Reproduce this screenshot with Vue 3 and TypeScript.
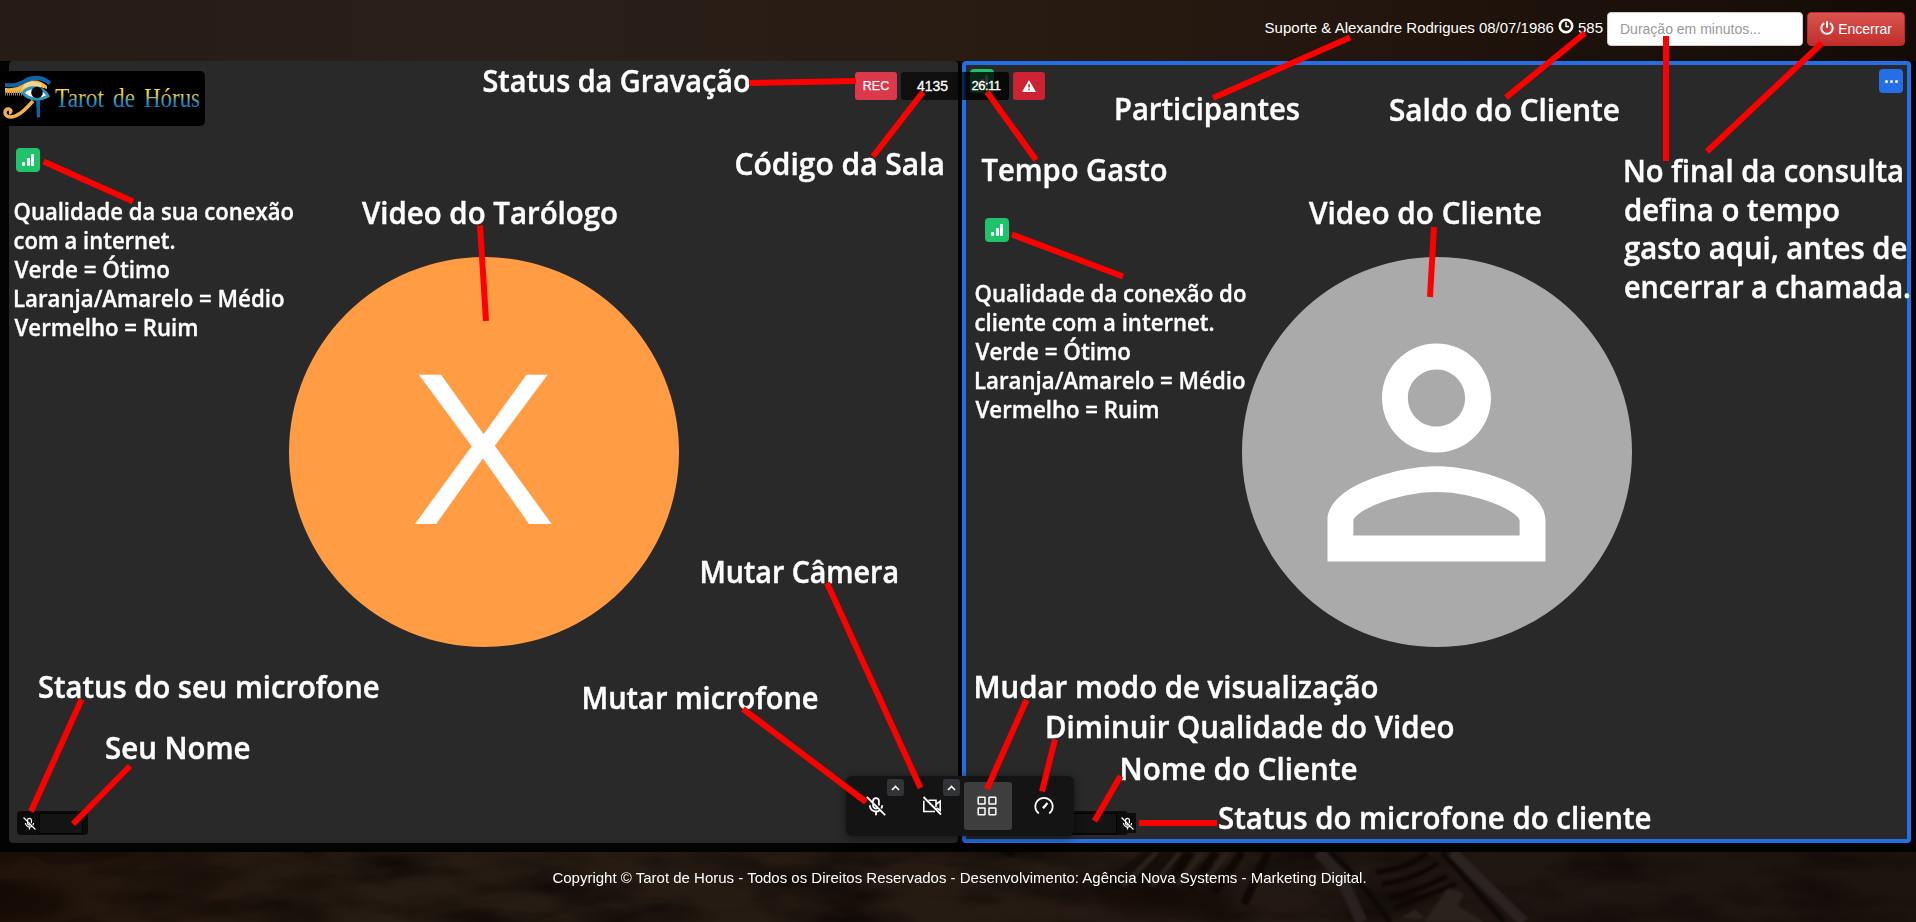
<script setup lang="ts">
interface Note { text: string; x: number; end: number; y: number; small?: boolean }

const notes: Note[] = [
  { text: 'Status da Gravação', x: 482.5, end: 750.5, y: 91.5 },
  { text: 'Código da Sala', x: 734.5, end: 945, y: 174.7 },
  { text: 'Video do Tarólogo', x: 362, end: 618, y: 223.5 },
  { text: 'Participantes', x: 1114, end: 1300, y: 119.7 },
  { text: 'Tempo Gasto', x: 981.5, end: 1167.5, y: 180.7 },
  { text: 'Video do Cliente', x: 1309, end: 1542, y: 223.5 },
  { text: 'Saldo do Cliente', x: 1389, end: 1620, y: 120.5 },
  { text: 'No final da consulta', x: 1623, end: 1904, y: 181.5 },
  { text: 'defina o tempo', x: 1624, end: 1840, y: 220.5 },
  { text: 'gasto aqui, antes de', x: 1624, end: 1907.5, y: 259 },
  { text: 'encerrar a chamada.', x: 1624, end: 1911, y: 297.5 },
  { text: 'Mudar modo de visualização', x: 973.5, end: 1378.5, y: 697.5 },
  { text: 'Diminuir Qualidade do Video', x: 1045, end: 1454.5, y: 738 },
  { text: 'Nome do Cliente', x: 1119.5, end: 1357.5, y: 780.3 },
  { text: 'Status do microfone do cliente', x: 1218, end: 1651.5, y: 829.3 },
  { text: 'Status do seu microfone', x: 38, end: 379.5, y: 697.5 },
  { text: 'Seu Nome', x: 105, end: 250.5, y: 758.5 },
  { text: 'Mutar Câmera', x: 699.5, end: 899, y: 582.5 },
  { text: 'Mutar microfone', x: 581.5, end: 818.5, y: 708.5 },
  { text: 'Qualidade da sua conexão', x: 13.5, end: 294, y: 219.5, small: true },
  { text: 'com a internet.', x: 13.5, end: 175.5, y: 248.5, small: true },
  { text: 'Verde = Ótimo', x: 14.5, end: 170, y: 277.5, small: true },
  { text: 'Laranja/Amarelo = Médio', x: 13, end: 284.5, y: 306.5, small: true },
  { text: 'Vermelho = Ruim', x: 14.5, end: 198.5, y: 335.5, small: true },
  { text: 'Qualidade da conexão do', x: 974.5, end: 1246.5, y: 301.5, small: true },
  { text: 'cliente com a internet.', x: 974.5, end: 1214.5, y: 330.5, small: true },
  { text: 'Verde = Ótimo', x: 975.5, end: 1131, y: 359.5, small: true },
  { text: 'Laranja/Amarelo = Médio', x: 974, end: 1245.5, y: 388.5, small: true },
  { text: 'Vermelho = Ruim', x: 975.5, end: 1159.5, y: 417.5, small: true },
]

const pointers: number[][] = [
  [749, 83, 856, 81], [923, 92, 873, 156.5], [987, 92, 1036, 160],
  [1350, 37.5, 1213, 98], [1585, 33, 1506, 97.5], [1666, 36, 1666, 161],
  [1822, 43, 1707, 151.5], [43.5, 161.5, 133, 201.5], [1012, 234.5, 1123, 276.5],
  [480, 225.5, 486, 321], [1434, 227, 1430, 297], [827, 583, 920.5, 788],
  [743, 709, 866, 802], [1026.5, 700, 987, 789], [1055, 739.5, 1042, 791.5],
  [1120.5, 776, 1094.5, 821], [1139, 823, 1217, 823], [81.5, 699.5, 31, 811.5],
  [130, 766, 73, 824],
]
</script>

<template>
  <div class="page">
    <svg class="backdrop" width="1916" height="922">
      <defs>
        <linearGradient id="wood" x1="0" x2="1" y1="0" y2="0">
          <stop offset="0" stop-color="#261b15" /><stop offset=".25" stop-color="#2a1f1a" />
          <stop offset=".5" stop-color="#281c13" /><stop offset=".7" stop-color="#22160e" />
          <stop offset="1" stop-color="#150b06" />
        </linearGradient>
        <linearGradient id="sand" x1="0" x2="1" y1="0" y2="0">
          <stop offset="0" stop-color="#22140b" /><stop offset=".2" stop-color="#261c13" />
          <stop offset=".5" stop-color="#261b13" /><stop offset=".75" stop-color="#211712" />
          <stop offset="1" stop-color="#1e140f" />
        </linearGradient>
        <filter id="grain" x="0" y="0" width="100%" height="100%" color-interpolation-filters="sRGB">
          <feTurbulence type="fractalNoise" baseFrequency=".009 .03" numOctaves="4" seed="8" />
          <feColorMatrix values="0 0 0 0 .06  0 0 0 0 .035  0 0 0 0 .02  2 0 0 0 -.75" />
        </filter>
        <filter id="soft" color-interpolation-filters="sRGB"><feGaussianBlur stdDeviation="1.3" /></filter>
        <filter id="haze" color-interpolation-filters="sRGB"><feGaussianBlur stdDeviation="7" /></filter>
      </defs>
      <rect width="1916" height="922" fill="url(#wood)" />
      <rect y="852" width="1916" height="70" fill="url(#sand)" />
      <rect y="852" width="1916" height="70" filter="url(#grain)" />
      <g filter="url(#haze)" fill="#120904" opacity=".7">
        <ellipse cx="5" cy="902" rx="65" ry="20" />
        <ellipse cx="1165" cy="900" rx="70" ry="14" />
      </g>
      <g filter="url(#soft)">
        <path d="M20 852H130Q100 866 50 864Z" fill="#120a05" opacity=".5" />
        <path d="M1000 852H1018L1011 857Z" fill="#0c0603" />
        <path d="M1142 852L1096 890H1140L1160 880 1190 852Z" fill="#120b07" opacity=".8" />
        <path d="M1157 852L1123 886M1180 852L1152 886M1203 852L1178 884M1228 852L1203 884" stroke="#2b211b" stroke-width="5" />
        <path d="M1191 852L1166 886M1216 852L1190 888M1242 852L1214 892M1268 852L1244 904" stroke="#0f0805" stroke-width="8" />
        <path d="M1318 852C1345 875 1350 900 1362 922" fill="none" stroke="#282120" stroke-width="12" />
        <path d="M1330 852C1357 875 1370 895 1390 922M1442 852L1504 922" fill="none" stroke="#0e0907" stroke-width="5" />
        <path d="M1452 852L1524 922" stroke="#2a2321" stroke-width="11" />
        <path d="M1376 872Q1405 870 1427 853M1382 884Q1414 880 1438 863M1390 898Q1423 889 1447 876M1394 908L1456 884" fill="none" stroke="#0e0805" stroke-width="5" />
        <path d="M1424 922L1448 888 1464 893 1458 906 1484 922Z" fill="#2b221c" />
        <path d="M1402 918L1415 909 1425 919" fill="#2b221c" />
      </g>
    </svg>

    <header class="topbar">
      <div class="people">
        <span>Suporte &amp; Alexandre Rodrigues 08/07/1986</span>
        <svg class="clock" viewBox="0 0 16 16"><circle cx="8" cy="8" r="6.2" fill="none" stroke="#fff" stroke-width="2.6" /><path d="M8 4v4.6h3" fill="none" stroke="#fff" stroke-width="1.5" /></svg>
        <span>585</span>
      </div>
      <input class="duration" type="text" placeholder="Duração em minutos..." />
      <button class="finish">
        <svg width="14" height="14" viewBox="0 0 14 14"><path d="M4.2 2.2A5.7 5.7 0 1 0 9.8 2.2M7 .2v6.6" fill="none" stroke="#fff" stroke-width="2" /></svg>
        <span>Encerrar</span>
      </button>
    </header>

    <main class="stage">
      <section class="tile">
        <div class="avatar orange"><span class="initial">X</span></div>
        <div class="name-tag mine">
          <svg class="mini-mic" viewBox="0 0 24 24"><use href="#mic-off" /></svg>
          <i class="redacted"></i>
        </div>
      </section>
      <section class="tile client">
        <div class="avatar gray">
          <svg width="327" height="327" viewBox="0 0 24 24" fill="#fff"><path d="M12 5.9c1.16 0 2.1.94 2.1 2.1s-.94 2.1-2.1 2.1S9.9 9.16 9.9 8s.94-2.1 2.1-2.1m0 9c2.97 0 6.1 1.46 6.1 2.1v1.1H5.9V17c0-.64 3.13-2.1 6.1-2.1M12 4C9.79 4 8 5.79 8 8s1.79 4 4 4 4-1.79 4-4-1.79-4-4-4m0 9c-2.67 0-8 1.34-8 4v3h16v-3c0-2.66-5.33-4-8-4" /></svg>
        </div>
        <button class="more"><i></i><i></i><i></i></button>
        <div class="name-tag theirs"><i class="redacted"></i></div>
        <span class="client-mic"><svg class="mini-mic" viewBox="0 0 24 24"><use href="#mic-off" /></svg></span>
      </section>

      <div class="logo">
        <svg width="205" height="55" viewBox="0 0 205 55">
          <defs>
            <linearGradient id="brand" gradientUnits="userSpaceOnUse" x1="0" y1="16" x2="0" y2="38">
              <stop offset=".1" stop-color="#f8dc50" /><stop offset=".42" stop-color="#d0bd55" />
              <stop offset=".6" stop-color="#3f9cb8" /><stop offset=".85" stop-color="#1878bd" />
            </linearGradient>
          </defs>
          <path d="M5 12C15 13 20 11 26 7 34 3 45 4 51 11L49 14C42 8 34 8 26 12 20 16 13 17 5 16Z" fill="#1262a8" />
          <path d="M5 17C16 18 22 14 28 11 35 8 42 10 47 15L47 18C36 14 29 18 23 22H5Z" fill="#edb544" />
          <path d="M24 13Q32 8 42 13L41 16Q30 13 22 19Z" fill="#f1d694" />
          <path d="M5 22.500H23" stroke="#a18442" stroke-width="4" stroke-dasharray="1 1" />
          <path d="M23 22C28 15 42 14 48 25C40 30 29 29 23 22Z" fill="#fff" stroke="#3793ba" stroke-width="3" />
          <circle cx="37" cy="21.500" r="5.800" fill="#05080b" />
          <path d="M36 29H40V46L37 47Z" fill="#1262a8" />
          <path d="M33 30C25 39 18 46 10 46C3 45 4 37 9 38C12 39 11 42 9 42" fill="none" stroke="#f1b341" stroke-width="3.400" />
          <g class="brand-text">
            <text x="55" y="35.500" textLength="49" lengthAdjust="spacingAndGlyphs">Tarot</text>
            <text x="113" y="35.500" textLength="22" lengthAdjust="spacingAndGlyphs">de</text>
            <text x="144" y="35.500" textLength="56" lengthAdjust="spacingAndGlyphs">Hórus</text>
          </g>
        </svg>
      </div>

      <div v-for="place in ['mine-signal', 'hidden-signal', 'client-signal']" :key="place" class="signal" :class="place">
        <i></i><i></i><i></i>
      </div>

      <div class="status">
        <span class="rec">REC</span>
        <div class="session"><span class="room">4135</span><span class="timer">26:11</span></div>
        <span class="warning"><svg width="14" height="12" viewBox="0 0 14 12"><path d="M7 0L14 12H0Z" fill="#fff" /><path d="M7 4.2v3.4M7 8.7v1.6" stroke="#cc2233" stroke-width="1.6" /></svg></span>
      </div>

      <nav class="toolbar">
        <span class="tool mic">
          <svg width="20" height="20" viewBox="0 0 24 24">
            <g id="mic-off" fill="none" stroke="#fff" stroke-width="2.2">
              <path d="M8.5 7V6a3.5 3.5 0 0 1 7 0v5.5M8.5 8v3.5a3.5 3.5 0 0 0 5 3.2M4.5 11a7.5 7.5 0 0 0 12 6M19.5 11a7.5 7.5 0 0 1-1.2 4M12 18.500V23M1 1l22 22" />
            </g>
          </svg>
        </span>
        <span class="tool camera">
          <svg width="20" height="20" viewBox="0 0 20 20" fill="none" stroke="#fff" stroke-width="1.6"><path d="M6.500 4.300H14V8.500L18.200 5.200V14.500L14.500 11.800M14 8.500V11M13 15.500H1.800V4.800" /><path d="M1.500 1L19 18.500" stroke-width="1.8" /></svg>
        </span>
        <span class="tool grid">
          <svg width="20" height="20" viewBox="0 0 20 20" fill="none" stroke="#fff" stroke-width="1.5"><rect x="1.2" y="1.2" width="6.800" height="6.800" rx=".5" /><rect x="12" y="1.200" width="6.800" height="6.800" rx=".5" /><rect x="1.200" y="12" width="6.800" height="6.800" rx=".5" /><rect x="12" y="12" width="6.800" height="6.800" rx=".5" /></svg>
        </span>
        <span class="tool gauge">
          <svg width="20" height="20" viewBox="0 0 20 20" fill="none" stroke="#fff" stroke-width="1.7"><path d="M4.800 17.500A8.700 8.700 0 1 1 15.200 17.500" /><path d="M9 12.200L13.500 7" stroke-width="2.400" /></svg>
        </span>
        <b class="caret first"><svg width="9" height="6" viewBox="0 0 9 6"><path d="M1 5L4.500 1.400 8 5" fill="none" stroke="#fff" stroke-width="1.6" /></svg></b>
        <b class="caret second"><svg width="9" height="6" viewBox="0 0 9 6"><path d="M1 5L4.500 1.400 8 5" fill="none" stroke="#fff" stroke-width="1.6" /></svg></b>
      </nav>
    </main>

    <footer class="copyright">Copyright © Tarot de Horus - Todos os Direitos Reservados - Desenvolvimento: Agência Nova Systems - Marketing Digital.</footer>

    <svg class="annotations" width="1916" height="922">
      <text v-for="(note, i) in notes" :key="'n' + i" :x="note.x" :y="note.y" :textLength="note.end - note.x" lengthAdjust="spacingAndGlyphs" :class="{ small: note.small }">{{ note.text }}</text>
      <line v-for="(p, i) in pointers" :key="'p' + i" :x1="p[0]" :y1="p[1]" :x2="p[2]" :y2="p[3]" />
    </svg>
  </div>
</template>

<style>
html, body { margin: 0; background: #000; overflow: hidden; }
</style>

<style scoped>
* { box-sizing: border-box; }
.page { position: relative; width: 1916px; height: 922px; display: flex; flex-direction: column; overflow: hidden; color: #fff; font-family: "Liberation Sans", Arial, sans-serif; }
.backdrop, .annotations { position: absolute; inset: 0; }
.annotations { z-index: 5; pointer-events: none; }
.annotations text { fill: #fff; stroke: #fff; stroke-width: .45px; font: 600 30.5px "Open Sans", "Noto Sans", sans-serif; }
.annotations text.small { font-size: 23px; stroke-width: .35px; }
.annotations line { stroke: #f00; stroke-width: 6; }

.topbar { position: relative; height: 61px; display: flex; justify-content: flex-end; align-items: flex-start; gap: 4px; padding: 12px 11px 0 0; }
.people { display: flex; align-items: center; gap: 4px; height: 31px; font-size: 15px; white-space: nowrap; }
.clock { width: 16px; height: 16px; margin-top: -3px; }
.duration { width: 196px; height: 34px; padding: 6px 12px; border: 1px solid #ccc; border-radius: 4px; background: #fff; font: 14px "Liberation Sans", Arial, sans-serif; }
.duration::placeholder { color: #999; }
.finish { width: 98px; height: 34px; display: flex; align-items: center; justify-content: center; gap: 4px; padding: 0; border: 1px solid #b92c28; border-radius: 4px; background: linear-gradient(#d9534f, #c12e2a); color: #fff; font: 14px "Liberation Sans", Arial, sans-serif; }
.finish svg { margin-top: -2px; }

.stage { position: relative; height: 791px; display: flex; gap: 4px; padding: 0 5px 9px 9px; background: #030303; }
.tile { position: relative; width: 949px; height: 782px; display: flex; align-items: center; justify-content: center; border-radius: 4px; background: #292929; }
.client { border: 4px solid #246fe5; }
.avatar { width: 390px; height: 390px; display: flex; align-items: center; justify-content: center; border-radius: 50%; }
.orange { background: #ff9c44; }
.initial { font: 209px/1 "Open Sans", sans-serif; transform: translateY(-9px) scaleX(1.145); }
.gray { background: #aaa; }
.more { position: absolute; top: 4px; right: 4px; width: 24px; height: 24px; display: flex; align-items: center; justify-content: center; gap: 2px; border: 0; padding: 0; border-radius: 4px; background: #246fe5; }
.more i { width: 3px; height: 3px; border-radius: 50%; background: #fff; }
.name-tag { position: absolute; display: flex; align-items: center; height: 24px; border-radius: 4px; background: #0b0b0b; }
.mine { left: 8px; top: 750px; width: 71px; padding-left: 6px; gap: 3px; }
.theirs { left: 100px; top: 746px; width: 62px; }
.redacted { width: 44px; height: 21px; border: 1px solid #030303; background: #141414; }
.theirs .redacted { width: 51px; border-left: 0; }
.mini-mic { width: 13px; height: 13px; flex: none; }
.client-mic { position: absolute; left: 152px; top: 748px; width: 18px; height: 20px; display: flex; align-items: center; justify-content: center; background: #0c0c0c; }

.logo { position: absolute; left: 0; top: 10px; width: 205px; height: 55px; border-radius: 5px; background: #000; overflow: hidden; }
.logo svg { display: block; }
.brand-text { fill: url(#brand); font: 27px "Liberation Serif", serif; }

.signal { position: absolute; width: 24px; height: 24px; display: flex; align-items: flex-end; justify-content: center; gap: 1.5px; padding-bottom: 6px; border-radius: 4px; background: #1fc36b; }
.signal i { width: 3px; height: 4px; border-radius: 1px; background: #fff; }
.signal i:nth-child(2) { height: 8px; }
.signal i:nth-child(3) { height: 12px; }
.mine-signal { left: 16px; top: 87px; }
.hidden-signal { left: 970px; top: 8px; }
.client-signal { left: 985px; top: 157px; }

.status { position: absolute; left: 855px; top: 11px; height: 28px; display: flex; gap: 4px; font: 13px/28px "Liberation Sans", Arial, sans-serif; }
.rec { width: 42px; text-align: center; border-radius: 3px; background: #db384b; font-size: 12.5px; -webkit-text-stroke: .25px #fff; }
.session { width: 108px; display: flex; border-radius: 3px; overflow: hidden; }
.room { width: 63px; padding-left: 16px; background: rgba(0, 0, 0, .62); font-size: 14px; }
.timer { flex: 1; padding-left: 7.5px; background: rgba(0, 0, 0, .8); font-size: 13px; letter-spacing: -.5px; }
.room, .timer { -webkit-text-stroke: .3px #fff; }
.warning { width: 32px; display: flex; align-items: center; justify-content: center; border-radius: 3px; background: #cc2233; }

.toolbar { position: absolute; left: 846px; top: 715px; width: 228px; height: 60px; display: flex; align-items: center; padding-left: 6px; border-radius: 6px; background: #141414; box-shadow: 0 2px 10px rgba(0, 0, 0, .5); }
.tool { width: 48px; height: 48px; display: flex; align-items: center; justify-content: center; border-radius: 3px; }
.camera { margin-left: 8px; }
.grid { margin-left: 8px; padding-right: 3px; background: #3e3e3e; }
.gauge { margin-left: 8px; }
.caret { position: absolute; top: 3px; width: 17px; height: 17px; display: flex; align-items: center; justify-content: center; border-radius: 3px; background: #333438; }
.first { left: 41px; }
.second { left: 97px; }

.copyright { position: relative; height: 70px; padding: 17px 0 0 3px; text-align: center; font-size: 15px; line-height: 18px; }
</style>
